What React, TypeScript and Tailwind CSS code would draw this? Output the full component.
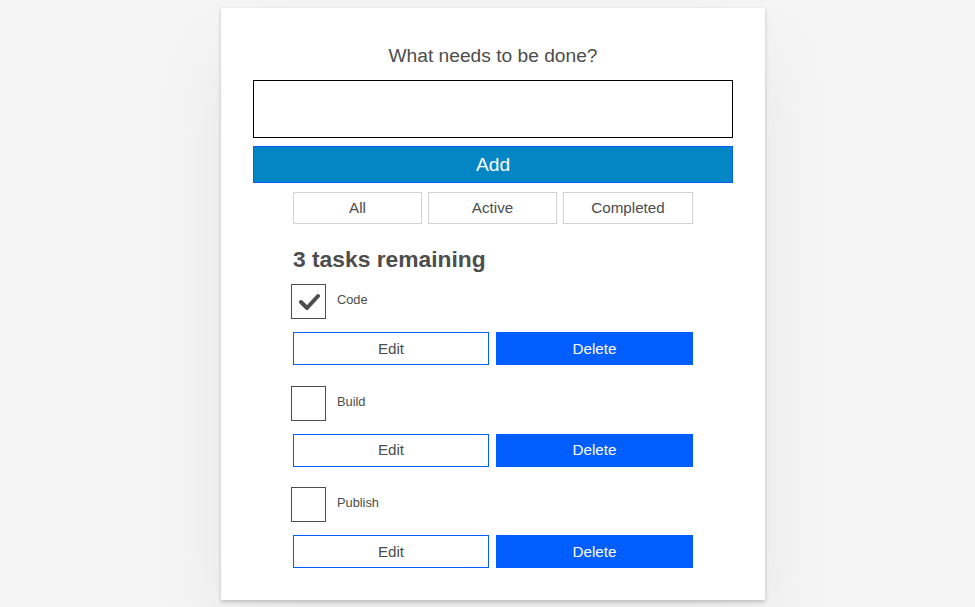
const TASKS = [
  { name: "Code", done: true },
  { name: "Build", done: false },
  { name: "Publish", done: false },
];

const FILTERS = [
  { label: "All", w: "w-[129px]" },
  { label: "Active", w: "w-[129px]" },
  { label: "Completed", w: "w-[130px]" },
];

export default function App() {
  return (
    <div className="min-h-[607px] bg-[#f5f5f5] pt-2 font-['Liberation_Sans',Arial,sans-serif] text-[#4d4d4d]">
      <div className="ml-[221px] w-[544px] bg-white px-8 pt-[36px] pb-[32px] shadow-[0_2px_4px_rgba(0,0,0,0.2),0_2.5rem_5rem_rgba(0,0,0,0.06)]">
        {/* new task form */}
        <h2 className="text-center text-[19.2px] leading-6">What needs to be done?</h2>
        <input
          type="text"
          className="mt-[12px] block h-[58px] w-full border border-black bg-white outline-none"
        />
        <button className="mt-2 flex h-[37px] w-full items-center justify-center border border-[#005eff] bg-[#0586c4] pt-px text-[19.2px] text-white">
          Add
        </button>

        {/* filters */}
        <div className="mt-[9px] flex justify-center gap-[6px]">
          {FILTERS.map((f) => (
            <button
              key={f.label}
              className={`${f.w} flex h-[32px] items-center justify-center border border-[#d3d3d3] pt-px text-[15.2px]`}
            >
              {f.label}
            </button>
          ))}
        </div>

        {/* task list */}
        <div className="px-10">
          <h2 className="mt-[21px] text-[22.8px] font-bold leading-7">3 tasks remaining</h2>
          <ul className="mt-[11px] flex flex-col gap-[20.5px]">
            {TASKS.map((t) => (
              <li key={t.name} className="flex flex-col">
                <div className="ml-[-2px] flex items-start gap-[11px]">
                  <span className="flex h-[35px] w-[35px] items-center justify-center border border-[#4d4d4d]">
                    {t.done && (
                      <svg width="22" height="22" viewBox="0 0 22 22">
                        <polyline
                          points="3,11 9,17 20,5"
                          fill="none"
                          stroke="#4d4d4d"
                          strokeWidth="4"
                          strokeLinecap="round"
                          strokeLinejoin="round"
                        />
                      </svg>
                    )}
                  </span>
                  <span className="pt-[8px] text-[12.8px] leading-4">{t.name}</span>
                </div>
                <div className="mt-[13px] flex gap-[7px]">
                  <button className="flex h-[33px] w-[196px] items-center justify-center border border-[#005eff] bg-white pt-px text-[15.2px]">
                    Edit
                  </button>
                  <button className="flex h-[33px] w-[197px] items-center justify-center bg-[#005eff] pt-px text-[15.2px] text-white">
                    Delete
                  </button>
                </div>
              </li>
            ))}
          </ul>
        </div>
      </div>
    </div>
  );
}
